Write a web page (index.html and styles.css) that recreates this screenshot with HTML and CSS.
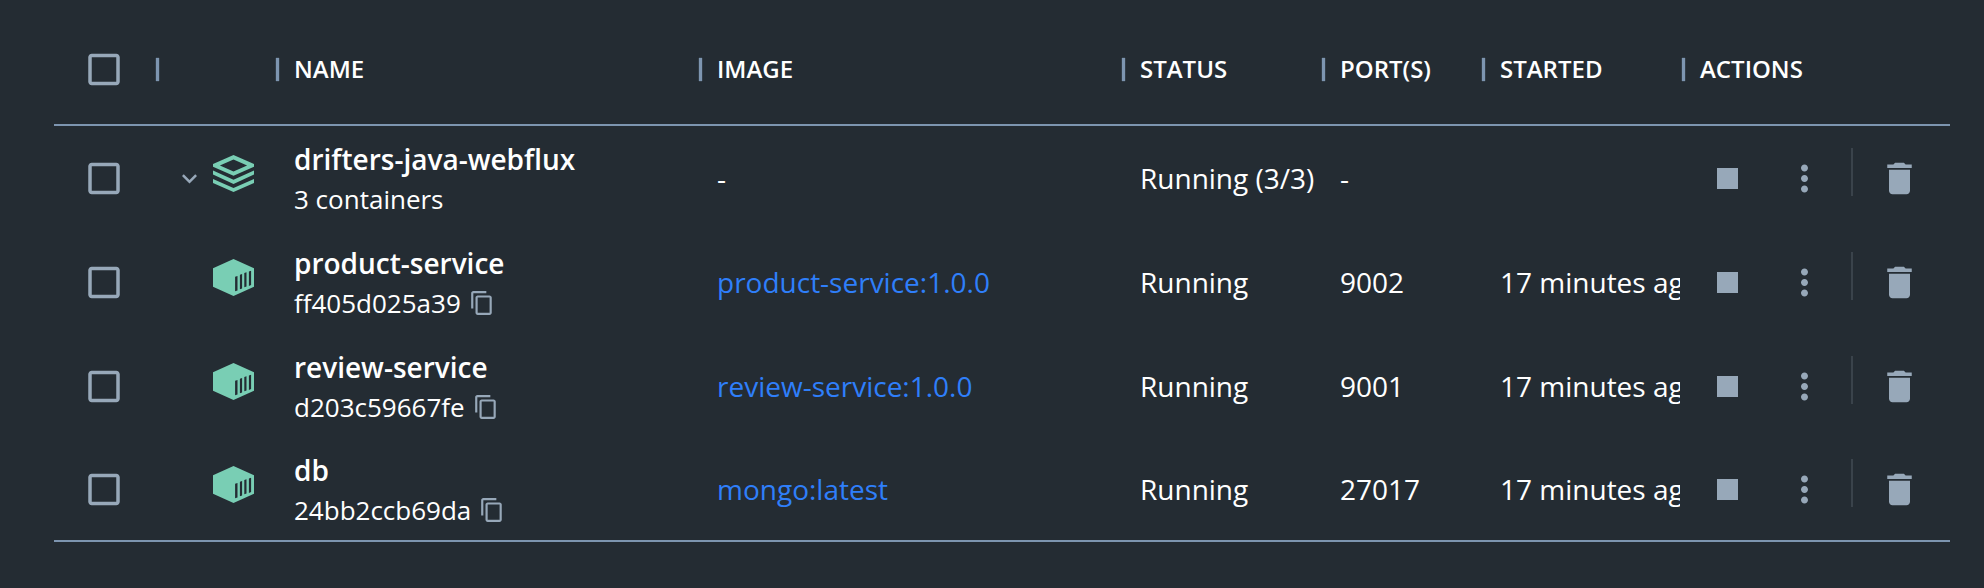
FILE: index.html
```html
<!DOCTYPE html>
<html lang="en">
<head>
<meta charset="utf-8">
<title>Containers</title>
<link rel="stylesheet" href="styles.css">
</head>
<body>
<svg class="defs" width="0" height="0" aria-hidden="true">
  <symbol id="box" viewBox="0 -.2857 24.5714 24.5714"><path d="M19 5v14H5V5h14m0-2H5c-1.1 0-2 .9-2 2v14c0 1.1.9 2 2 2h14c1.1 0 2-.9 2-2V5c0-1.1-.9-2-2-2z"/></symbol>
  <symbol id="sep" viewBox="-.3 -.3 24.6 24.6"><path d="M11 19V5h2v14z"/></symbol>
  <symbol id="chevron" viewBox="-.4 -.4 24.8 24.8"><path d="M16.59 8.59 12 13.17 7.41 8.59 6 10l6 6 6-6z"/></symbol>
  <symbol id="stack" viewBox=".3 0 42 38"><path fill-rule="evenodd" d="M20.8 0 41.3 9v2.7L20.8 20.8.3 11.7V9zM20.8 4.4 7.2 10.4l13.6 6 13.6-6zM.3 15.6l20.5 9.2 20.5-9.2v4L20.8 28.9.3 19.6zM.3 23.9l20.5 9.1 20.5-9.1v4L20.8 37.1.3 27.9z"/></symbol>
  <symbol id="container" viewBox=".3 0 42 38"><path fill-rule="evenodd" d="M20.8 0 41.3 9.2v18.6L20.8 37 .3 27.8V9.2zM22.4 17.7v14.5l2.4-.7V17zM27.2 15.8v14.5l2.2-.9V15zM31.6 13.9v14.4l2.2-.9V13.2zM36.2 12.6v14.3l2.2-.9V11.7z"/></symbol>
  <symbol id="copy" viewBox="0 0 24 24"><path d="M16 1H4c-1.1 0-2 .9-2 2v14h2V3h12V1zm3 4H8c-1.1 0-2 .9-2 2v14c0 1.1.9 2 2 2h11c1.1 0 2-.9 2-2V7c0-1.1-.9-2-2-2zm0 16H8V7h11v14z"/></symbol>
  <symbol id="stop" viewBox="-.2857 -.2857 24.5714 24.5714"><path d="M6 6h12v12H6z"/></symbol>
  <symbol id="more" viewBox="-.2857 -.2857 24.5714 24.5714"><path d="M12 8c1.1 0 2-.9 2-2s-.9-2-2-2-2 .9-2 2 .9 2 2 2zm0 2c-1.1 0-2 .9-2 2s.9 2 2 2 2-.9 2-2-.9-2-2-2zm0 6c-1.1 0-2 .9-2 2s.9 2 2 2 2-.9 2-2-.9-2-2-2z"/></symbol>
  <symbol id="trash" viewBox="-.2857 -.2857 24.5714 24.5714"><path d="M6 19c0 1.1.9 2 2 2h8c1.1 0 2-.9 2-2V7H6v12zM19 4h-3.5l-1-1h-5l-1 1H5v2h14V4z"/></symbol>
</svg>

<main class="table">
  <div class="row head">
    <div class="cell check"><svg class="icon"><use href="#box"/></svg><svg class="sep"><use href="#sep"/></svg></div>
    <div class="cell"><svg class="sep"><use href="#sep"/></svg></div>
    <div class="cell">NAME<svg class="sep"><use href="#sep"/></svg></div>
    <div class="cell">IMAGE<svg class="sep"><use href="#sep"/></svg></div>
    <div class="cell">STATUS<svg class="sep"><use href="#sep"/></svg></div>
    <div class="cell">PORT(S)<svg class="sep"><use href="#sep"/></svg></div>
    <div class="cell">STARTED<svg class="sep"><use href="#sep"/></svg></div>
    <div class="cell">ACTIONS</div>
  </div>

  <div class="row">
    <div class="cell check"><svg class="icon"><use href="#box"/></svg></div>
    <div class="cell kind"><svg class="chevron"><use href="#chevron"/></svg><svg class="glyph"><use href="#stack"/></svg></div>
    <div class="cell name"><div class="title">drifters-java-webflux</div><div class="sub">3 containers</div></div>
    <div class="cell">-</div>
    <div class="cell">Running (3/3)</div>
    <div class="cell">-</div>
    <div class="cell"></div>
    <div class="cell actions"><svg class="icon"><use href="#stop"/></svg><svg class="icon more"><use href="#more"/></svg><span class="divider"></span><svg class="icon"><use href="#trash"/></svg></div>
  </div>

  <div class="row">
    <div class="cell check"><svg class="icon"><use href="#box"/></svg></div>
    <div class="cell kind"><svg class="glyph"><use href="#container"/></svg></div>
    <div class="cell name"><div class="title">product-service</div><div class="sub">ff405d025a39<svg class="copy"><use href="#copy"/></svg></div></div>
    <div class="cell"><a class="link">product-service:1.0.0</a></div>
    <div class="cell">Running</div>
    <div class="cell">9002</div>
    <div class="cell started">17 minutes ago</div>
    <div class="cell actions"><svg class="icon"><use href="#stop"/></svg><svg class="icon more"><use href="#more"/></svg><span class="divider"></span><svg class="icon"><use href="#trash"/></svg></div>
  </div>

  <div class="row">
    <div class="cell check"><svg class="icon"><use href="#box"/></svg></div>
    <div class="cell kind"><svg class="glyph"><use href="#container"/></svg></div>
    <div class="cell name"><div class="title">review-service</div><div class="sub">d203c59667fe<svg class="copy"><use href="#copy"/></svg></div></div>
    <div class="cell"><a class="link">review-service:1.0.0</a></div>
    <div class="cell">Running</div>
    <div class="cell">9001</div>
    <div class="cell started">17 minutes ago</div>
    <div class="cell actions"><svg class="icon"><use href="#stop"/></svg><svg class="icon more"><use href="#more"/></svg><span class="divider"></span><svg class="icon"><use href="#trash"/></svg></div>
  </div>

  <div class="row last">
    <div class="cell check"><svg class="icon"><use href="#box"/></svg></div>
    <div class="cell kind"><svg class="glyph"><use href="#container"/></svg></div>
    <div class="cell name"><div class="title">db</div><div class="sub">24bb2ccb69da<svg class="copy"><use href="#copy"/></svg></div></div>
    <div class="cell"><a class="link">mongo:latest</a></div>
    <div class="cell">Running</div>
    <div class="cell">27017</div>
    <div class="cell started">17 minutes ago</div>
    <div class="cell actions"><svg class="icon"><use href="#stop"/></svg><svg class="icon more"><use href="#more"/></svg><span class="divider"></span><svg class="icon"><use href="#trash"/></svg></div>
  </div>
</main>
</body>
</html>
```

FILE: styles.css
```css
* {
  box-sizing: border-box;
}

body {
  margin: 0;
  height: 588px;
  overflow: hidden;
  background: #242c33;
  color: #fff;
  font: 400 28px/38px "Open Sans", "Noto Sans", sans-serif;
}

svg {
  display: block;
  flex: none;
  fill: currentColor;
}

.defs {
  position: absolute;
}

.table {
  width: 1896px;
  margin-left: 54px;
  padding-top: 14px;
}

.row {
  display: grid;
  grid-template-columns: 104px 120px 423px 423px 200px 160px 200px 266px;
  height: 104px;
}

.head {
  height: 112px;
  border-bottom: 2px solid #7d95b0;
  font-size: 24px;
  font-weight: 600;
}

.last {
  border-bottom: 2px solid #7d95b0;
}

.cell {
  display: flex;
  align-items: center;
  min-width: 0;
  padding: 0 4px 0 16px;
  white-space: nowrap;
}

.head .cell {
  padding-right: 0;
}

.check {
  padding-top: 1px;
  padding-left: 29px;
  color: #97a8b9;
}

.icon {
  width: 43px;
  height: 43px;
}

.sep {
  width: 41px;
  height: 41px;
  margin: 1px -20px 0 auto;
  color: #7d95b0;
}

.check .sep {
  margin-top: 0;
}

.kind {
  justify-content: flex-end;
  gap: 8px;
  padding-top: 1px;
  padding-right: 23px;
}

.chevron {
  width: 31px;
  height: 31px;
  color: #97a8b9;
}

.glyph {
  width: 42px;
  height: 38px;
  margin-bottom: 9px;
  color: #79ceb4;
}

.name {
  flex-direction: column;
  align-items: flex-start;
  justify-content: center;
  padding-top: 1px;
}

.title {
  font-weight: 600;
  line-height: 40px;
}

.sub {
  display: flex;
  align-items: center;
  gap: 8px;
  margin-top: 1px;
  font-size: 26px;
  line-height: 38px;
}

.copy {
  width: 26px;
  height: 26px;
  color: #97a8b9;
}

.link {
  color: #2f7ffa;
}

.started {
  display: block;
  margin-right: 4px;
  padding-right: 0;
  line-height: 104px;
  overflow: hidden;
}

.last .started {
  line-height: 102px;
}

.actions {
  padding-top: 1px;
  padding-left: 22px;
  color: #97a8b9;
}

.more {
  margin-left: 34px;
}

.divider {
  width: 2px;
  height: 48px;
  margin: 0 25px 13px;
  background: #3a434b;
}
```
